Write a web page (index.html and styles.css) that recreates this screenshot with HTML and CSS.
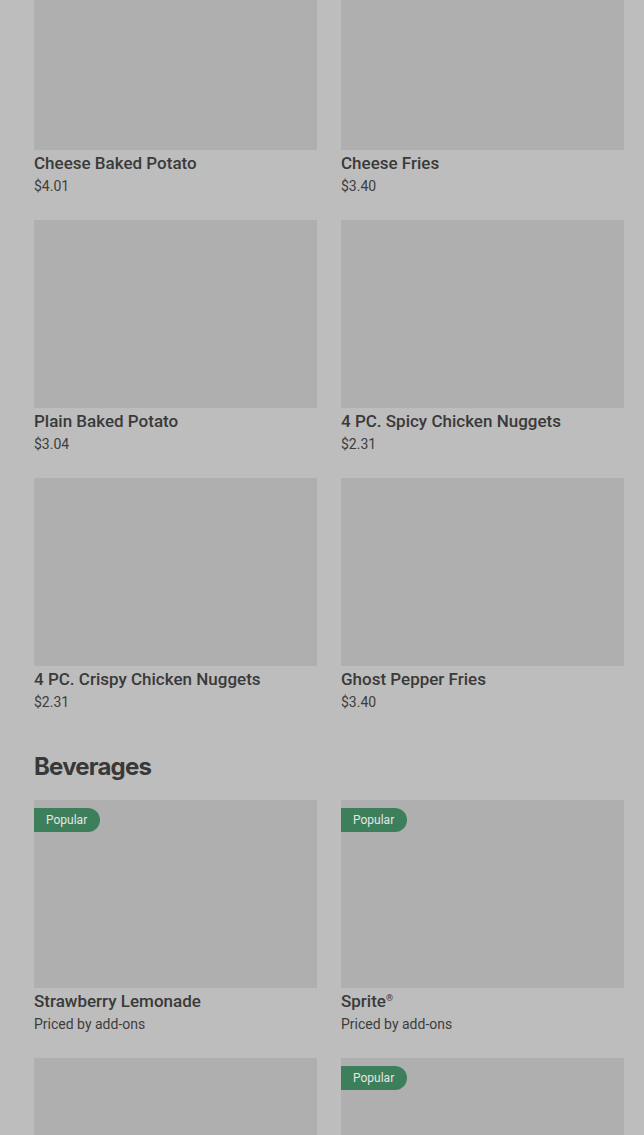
FILE: index.html
```html
<!DOCTYPE html>
<html lang="en">
<head>
    <meta charset="UTF-8">
    <meta name="viewport" content="width=device-width, initial-scale=1.0">
    <title>Menu</title>
    <link rel="stylesheet" href="styles.css">
</head>
<body>
    <main class="menu">

    <section class="menu-section first">
        <div class="item-grid">
            <div class="item">
                <div class="item-img short"></div>
                <div class="item-name">Cheese Baked Potato</div>
                <div class="item-price">$4.01</div>
            </div>
            <div class="item">
                <div class="item-img short"></div>
                <div class="item-name">Cheese Fries</div>
                <div class="item-price">$3.40</div>
            </div>
            <div class="item">
                <div class="item-img"></div>
                <div class="item-name">Plain Baked Potato</div>
                <div class="item-price">$3.04</div>
            </div>
            <div class="item">
                <div class="item-img"></div>
                <div class="item-name">4 PC. Spicy Chicken Nuggets</div>
                <div class="item-price">$2.31</div>
            </div>
            <div class="item">
                <div class="item-img"></div>
                <div class="item-name">4 PC. Crispy Chicken Nuggets</div>
                <div class="item-price">$2.31</div>
            </div>
            <div class="item">
                <div class="item-img"></div>
                <div class="item-name">Ghost Pepper Fries</div>
                <div class="item-price">$3.40</div>
            </div>
        </div>
    </section>

    <section class="menu-section">
        <h2>Beverages</h2>
        <div class="item-grid">
            <div class="item">
                <div class="item-img"><span class="badge">Popular</span></div>
                <div class="item-name">Strawberry Lemonade</div>
                <div class="item-price">Priced by add-ons</div>
            </div>
            <div class="item">
                <div class="item-img"><span class="badge">Popular</span></div>
                <div class="item-name">Sprite<sup>®</sup></div>
                <div class="item-price">Priced by add-ons</div>
            </div>
            <div class="item">
                <div class="item-img"></div>
                <div class="item-name">Coca-Cola®</div>
                <div class="item-price">Priced by add-ons</div>
            </div>
            <div class="item">
                <div class="item-img"><span class="badge">Popular</span></div>
                <div class="item-name">Lemonade</div>
                <div class="item-price">Priced by add-ons</div>
            </div>
        </div>
    </section>

    </main>
</body>
</html>
```

FILE: styles.css
```css
html, body {
    margin: 0;
    padding: 0;
    background: #bdbdbd;
    color: #333;
    font-family: Roboto, "Liberation Sans", sans-serif;
    overflow: hidden;
}
.menu {
    padding: 0 20px 0 34px;
}
.menu-section h2 {
    margin: 40px 0 17px 0;
    font-family: Inter, Roboto, sans-serif;
    font-size: 24px;
    font-weight: 700;
    letter-spacing: -0.8px;
    line-height: 32px;
    color: #383838;
}
.item-grid {
    display: grid;
    grid-template-columns: 1fr 1fr;
    column-gap: 24px;
    row-gap: 25px;
}
.item-img {
    height: 188px;
    background: #afafaf;
    position: relative;
}
.item-img.short {
    height: 150px;
}
.item-name {
    margin-top: 3px;
    font-size: 17px;
    font-weight: 500;
    line-height: 20px;
    color: #3a3a3a;
}
.item-name sup {
    font-size: 9px;
    vertical-align: 6px;
    line-height: 0;
}
.item-price {
    margin-top: 4px;
    font-size: 14px;
    line-height: 18px;
    color: #3d3d3d;
}
.badge {
    position: absolute;
    top: 8px;
    left: 0;
    background: #3d7f5b;
    color: #e6e6e6;
    font-size: 12px;
    line-height: 24px;
    padding: 0 13px 0 12px;
    border-radius: 0 12px 12px 0;
}
```
